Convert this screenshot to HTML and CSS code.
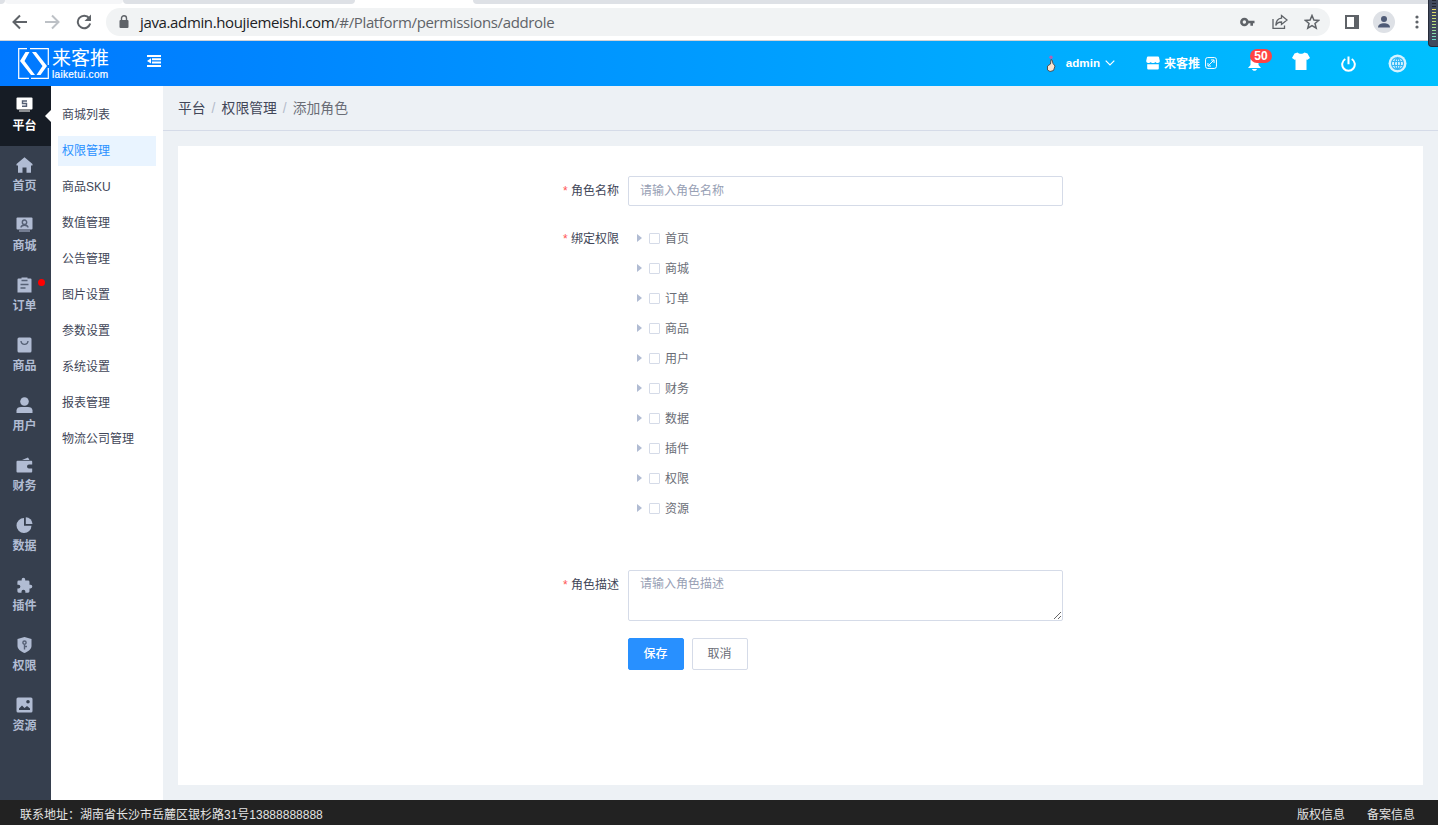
FILE: index.html
```html
<!DOCTYPE html>
<html lang="zh-CN">
<head>
  <meta charset="UTF-8">
  <title>添加角色</title>
  <link rel="stylesheet" href="styles.css">
</head>
<body>
  <div class="browser">
    <div class="tabs"><i class="t1"></i><i class="t2"></i><i class="t3"></i><i class="t4"></i></div>
    <div class="toolbar">
      <svg class="nav-icon" width="16" height="16" viewBox="0 0 16 16" fill="none" stroke="#5f6368" stroke-width="2"><path d="M15 8H2M8 1.5L1.5 8L8 14.5"/></svg>
      <svg class="nav-icon" width="16" height="16" viewBox="0 0 16 16" fill="none" stroke="#bdc1c6" stroke-width="2"><path d="M1 8H14M8 1.5L14.5 8L8 14.5"/></svg>
      <svg class="nav-icon" width="16" height="16" viewBox="0 0 16 16"><path d="M13.2 4.2A6.3 6.3 0 1 0 14.2 9.6" fill="none" stroke="#5f6368" stroke-width="2"/><path d="M15 0.5V7H8.5z" fill="#5f6368"/></svg>
      <div class="address">
        <svg width="10" height="14" viewBox="0 0 10 14"><rect x="0.5" y="5" width="9" height="8" rx="1" fill="#5f6368"/><path d="M2.5 5.5V3.3a2.5 2.5 0 0 1 5 0V5.5" fill="none" stroke="#5f6368" stroke-width="1.4"/></svg>
        <div class="url">java.admin.houjiemeishi.com<span>/#/Platform/permissions/addrole</span></div>
        <svg class="key" width="15" height="10" viewBox="0 0 15 10"><circle cx="4.4" cy="5" r="3" fill="none" stroke="#5f6368" stroke-width="2.6"/><path d="M7 3.7h7.5v2.6H13v2.4h-2.6V6.3H7z" fill="#5f6368"/></svg>
        <svg class="share" width="16" height="16" viewBox="0 0 16 16" fill="none" stroke="#5f6368" stroke-width="1.3"><path d="M1 5V14.3H12.5V11.5"/><path d="M9.5 1.5L15 6L9.500 10.500V8C6.500 8 4.800 9 3.800 11.500C4 7 6 4.500 9.500 4.200z"/></svg>
        <svg class="star" width="16" height="16" viewBox="0 0 16 16"><path d="M8 1.5L9.900 6L14.700 6.400L11 9.500L12.200 14.200L8 11.700L3.800 14.200L5 9.500L1.300 6.400L6.100 6z" fill="none" stroke="#5f6368" stroke-width="1.5"/></svg>
      </div>
      <svg class="panel" width="14" height="14" viewBox="0 0 14 14"><path d="M1 1H13V13H1z" fill="none" stroke="#5f6368" stroke-width="2"/><rect x="9" width="5" height="14" fill="#5f6368"/></svg>
      <svg class="profile" width="22" height="22" viewBox="0 0 22 22"><circle cx="11" cy="11" r="11" fill="#dee1e6"/><circle cx="11" cy="8" r="3" fill="#4f5b76"/><path d="M5 16.5c0-3 3-4.3 6-4.3s6 1.3 6 4.3z" fill="#4f5b76"/></svg>
      <svg class="more" width="4" height="14" viewBox="0 0 4 14" fill="#5f6368"><circle cx="2" cy="2" r="1.6"/><circle cx="2" cy="7" r="1.6"/><circle cx="2" cy="12" r="1.6"/></svg>
    </div>
    <div class="meter"><i></i></div>
  </div>

  <header class="header">
    <div class="logo">
      <svg width="31" height="31" viewBox="0 0 31 31" fill="none" stroke="#fff"><path d="M12 0.7H30.3V17M30.3 20V30.3H13M11 30.3H0.7V0.7H9" stroke-width="1.2"/><path d="M7.500 4H11.500L6.500 13L17 27H13L2 13z" fill="#fff" stroke="none"/><path d="M14 4H18L29 18L22.500 27H18.500L24.500 18z" fill="#fff" stroke="none"/></svg>
      <div class="logo-text">
        <b>来客推</b>
        <span>laiketui.com</span>
      </div>
    </div>
    <svg class="fold" width="14" height="12" viewBox="0 0 14 12" fill="#fff"><path d="M0 0h14v2H0zM5 3.2h9v2H5zM5 6.600h9v2H5zM0 10h14v2H0zM0 6L4 3.300V8.600z"/></svg>
    <div class="user">
      <svg class="avatar" width="10" height="17" viewBox="0 0 10 17"><path d="M5 4.5L4.500 9L1.500 11V15L4 16.500L7.500 15.500L9 11L7 8.500L6 5z" fill="#f7e5d2" stroke="#4a4648" stroke-width="0.9"/><circle cx="5" cy="2.2" r="1.7" fill="#b062b5"/></svg>
      <b>admin</b>
      <svg width="10" height="6" viewBox="0 0 10 6"><path d="M0.7 0.7L5 5L9.3 0.7" fill="none" stroke="#fff" stroke-width="1.2"/></svg>
    </div>
    <div class="shop">
      <svg width="14" height="14" viewBox="0 0 14 14" fill="#fff"><path d="M2 0.5h10a1 1 0 0 1 1 0.800L13.800 5c0 1.300-1 2-2 2S9.500 6.500 9.300 6C9 6.700 8 7 7 7S5 6.700 4.700 6C4.400 6.700 3.300 7 2.200 7S0.200 6.300 0.200 5L1 1.300a1 1 0 0 1 1-0.800zM1.200 8.200h11.600V12.500a1 1 0 0 1-1 1H2.200a1 1 0 0 1-1-1z"/></svg>
      <b>来客推</b>
      <svg width="12" height="12" viewBox="0 0 11 11" fill="none" stroke="#fff" stroke-width="0.9"><rect x="0.5" y="0.5" width="10" height="10" rx="2"/><path d="M3 8L8 3M5.500 2.700H8.300V5.500M2.700 5.500V8.300H5.500"/></svg>
    </div>
    <div class="bell">
      <svg width="13" height="15" viewBox="0 0 13 15" fill="#fff"><path d="M6.500 0.500C9 0.500 10.500 2.500 10.500 5V9L13 12H0L2.500 9V5C2.500 2.500 4 0.500 6.500 0.500zM4 13h5c-0.300 1-1.300 1.800-2.500 1.800S4.300 14 4 13z"/></svg>
      <em>50</em>
    </div>
    <svg class="shirt" width="18" height="18" viewBox="0 0 18 18" fill="#fff"><path d="M5.500 0.500C7 2.200 11 2.200 12.500 0.500L15.500 1.500L18 6L15 8L14.500 7.300V18H3.500V7.300L3 8L0 6L2.500 1.500z"/></svg>
    <svg class="power" width="15" height="16" viewBox="0 0 15 16" fill="none" stroke="#fff" stroke-width="2"><path d="M4.300 3A6.300 6.300 0 1 0 10.700 3M7.500 0.500V8.300"/></svg>
    <svg class="globe" width="19" height="19" viewBox="0 0 19 19"><circle cx="9.5" cy="9.5" r="9" fill="#d5f3ff"/><path d="M9.500 3.500a6 6 0 1 0 0 12a6 6 0 1 0 0-12zM9.500 3.500c-4 3-4 9 0 12c4-3 4-9 0-12zM9.500 3.500V15.500M4 7.500H15M4 11.500H15" fill="none" stroke="#31b7f6" stroke-width="1.1"/></svg>
  </header>

  <div class="main">
    <nav class="side">
      <a class="active"><svg viewBox="0 0 16 16"><rect y="0.5" width="16" height="12" rx="1"/><rect class="base" x="2.5" y="13" width="11" height="2"/><path class="cut" d="M10.500 4H6V6.500H10V9.300H5.500"/></svg>平台</a>
      <a><svg viewBox="0 0 16 16"><path d="M8 0.300L16 7V8.500H14.500V15.700H10V10.500H6V15.700H1.500V8.500H0V7z"/></svg>首页</a>
      <a><svg viewBox="0 0 16 16"><rect y="0.5" width="16" height="12" rx="1"/><rect class="base" x="2.5" y="13" width="11" height="2"/><path class="cut" d="M4.500 10.500C4.500 7.500 11.500 7.500 11.500 10.500M8 3A2.200 2.200 0 1 0 8 7.400A2.200 2.200 0 1 0 8 3"/></svg>商城</a>
      <a><svg viewBox="0 0 16 16"><path d="M2 1.500H5V0.500h6V1.500h3a1 1 0 0 1 1 1V15.500H1V2.500a1 1 0 0 1 1-1z"/><path class="cut" d="M5 3.500H11M4 7.500H12M4 11H9"/></svg>订单<i></i></a>
      <a><svg viewBox="0 0 16 16"><rect x="1" y="0.5" width="14" height="15" rx="1.5"/><path class="cut" d="M4.500 4C5 8.500 11 8.500 11.500 4"/></svg>商品</a>
      <a><svg viewBox="0 0 16 16"><circle cx="8" cy="4.5" r="4.3"/><path d="M0 16V13.500C0 11 2 10 4.500 10H11.500C14 10 16 11 16 13.500V16z"/></svg>用户</a>
      <a><svg viewBox="0 0 16 16"><path d="M5.500 3L11.500 0.500L13 3zM1 3.700H14.500a1 1 0 0 1 1.200 1V7.500H12.500a2 2 0 0 0 0 4H15.700V14.500a1 1 0 0 1-1.200 1H1a1 1 0 0 1-1-1V4.700a1 1 0 0 1 1-1z"/></svg>财务</a>
      <a><svg viewBox="0 0 16 16"><path d="M7.500 1V8.700H15A7.500 7.500 0 1 1 7.500 1z"/><path d="M9.300 0.200A7 7 0 0 1 16 6.900H9.300z"/></svg>数据</a>
      <a><svg viewBox="1 0 22 22.500"><path d="M20.500 11H19V7a2 2 0 0 0-2-2h-4V3.500a2.500 2.500 0 0 0-5 0V5H4a2 2 0 0 0-2 2v3.800h1.500a2.700 2.700 0 0 1 0 5.400H2V20a2 2 0 0 0 2 2h3.800v-1.500a2.700 2.700 0 0 1 5.400 0V22H17a2 2 0 0 0 2-2v-4h1.500a2.500 2.500 0 0 0 0-5z"/></svg>插件</a>
      <a><svg viewBox="0 0 16 16"><path d="M8 0L15 2V9C15 12.500 11.500 14.500 8 16C4.500 14.500 1 12.500 1 9V2z"/><path class="cut" d="M8 4A1.600 1.600 0 1 0 8 7.200A1.600 1.600 0 1 0 8 4M8 7.200V12.500M8 9.500H10.500"/></svg>权限</a>
      <a><svg viewBox="0 0 16 16"><rect y="0.5" width="16" height="15" rx="1.5"/><path class="hole" d="M2.500 13V11.500L5.500 8.500L8 11L10.500 9L13.500 11.500V13zM11.500 3A1.800 1.800 0 1 1 11.500 6.600A1.800 1.800 0 1 1 11.500 3z"/></svg>资源</a>
    </nav>

    <nav class="submenu">
      <a>商城列表</a>
      <a class="active">权限管理</a>
      <a>商品SKU</a>
      <a>数值管理</a>
      <a>公告管理</a>
      <a>图片设置</a>
      <a>参数设置</a>
      <a>系统设置</a>
      <a>报表管理</a>
      <a>物流公司管理</a>
    </nav>

    <div class="content">
      <div class="breadcrumb">平台<i>/</i>权限管理<i>/</i><span>添加角色</span></div>
      <form class="card">
        <div class="row">
          <label><i>*</i> 角色名称</label>
          <input type="text" placeholder="请输入角色名称">
        </div>
        <div class="row tree-row">
          <label><i>*</i> 绑定权限</label>
          <ul class="tree">
            <li><i></i><u></u>首页</li>
            <li><i></i><u></u>商城</li>
            <li><i></i><u></u>订单</li>
            <li><i></i><u></u>商品</li>
            <li><i></i><u></u>用户</li>
            <li><i></i><u></u>财务</li>
            <li><i></i><u></u>数据</li>
            <li><i></i><u></u>插件</li>
            <li><i></i><u></u>权限</li>
            <li><i></i><u></u>资源</li>
          </ul>
        </div>
        <div class="row">
          <label><i>*</i> 角色描述</label>
          <textarea placeholder="请输入角色描述"></textarea>
        </div>
        <div class="buttons">
          <button type="button" class="save">保存</button>
          <button type="button">取消</button>
        </div>
      </form>
    </div>
  </div>

  <footer class="footer">
    <div>联系地址：湖南省长沙市岳麓区银杉路31号13888888888</div>
    <div class="links"><a>版权信息</a><a>备案信息</a></div>
  </footer>
</body>
</html>
```
FILE: styles.css
```css
* {
  box-sizing: border-box;
}

body {
  margin: 0;
  height: 825px;
  overflow: hidden;
  display: flex;
  flex-direction: column;
  font-family: "Liberation Sans", "Noto Sans CJK SC", sans-serif;
  font-size: 12px;
  color: #414658;
}

svg {
  display: block;
  flex: none;
}

i, em {
  font-style: normal;
}

/* browser bar */
.browser {
  height: 41px;
  flex: none;
  background: #fff;
  border-bottom: 1px solid #d0d3d8;
  position: relative;
}

.tabs {
  height: 4px;
  display: flex;
}

.tabs i {
  background: #dee1e6;
  border-radius: 0 0 6px 6px;
}

.tabs .t1 {
  width: 5px;
  border-radius: 0 0 4px 0;
}

.tabs .t2 {
  width: 118px;
  background: #f5f6f8;
}

.tabs .t3 {
  width: 232px;
}

.tabs .t4 {
  margin-left: 118px;
  flex: 1;
  border-radius: 0 0 0 6px;
}

.toolbar {
  height: 36px;
  display: flex;
  align-items: center;
  padding-left: 12px;
}

.nav-icon {
  margin-right: 16px;
}

.address {
  width: 1224px;
  height: 28px;
  margin-left: -2px;
  border-radius: 14px;
  background: #f1f3f4;
  display: flex;
  align-items: center;
  padding: 0 10px 0 13px;
}

.url {
  flex: 1;
  margin-left: 11px;
  padding-bottom: 1px;
  font-family: "Open Sans", sans-serif;
  font-size: 15px;
  letter-spacing: -0.36px;
  color: #202124;
  white-space: nowrap;
}

.url span {
  color: #5f6368;
}

.key {
  margin-right: 17px;
}

.share {
  margin-right: 16px;
}

.panel {
  margin-left: 15px;
}

.profile {
  margin-left: 14px;
}

.more {
  margin-left: 20px;
}

.meter {
  position: absolute;
  z-index: 2;
  right: 0;
  top: 0;
  width: 10px;
  height: 47px;
  padding: 0 2px 0 3px;
  background: #414a5e;
  border: 1px solid #252a38;
  border-width: 0 0 1px 1px;
  border-radius: 0 0 0 4px;
}

.meter i {
  display: block;
  height: 40px;
  background: repeating-linear-gradient(transparent 0 1.5px, #414a5e 1.5px 3px), linear-gradient(#20242f 0 8px, #eedb65 9px, #b8df7d 24px, #69dccc);
}

/* header */
.header {
  height: 45px;
  flex: none;
  display: flex;
  align-items: center;
  padding: 0 31px 0 18px;
  background: linear-gradient(90deg, #0078ff, #00c0ff);
  color: #fff;
}

.logo {
  display: flex;
  width: 129px;
  padding-top: 1px;
}

.logo-text {
  margin-left: 3px;
}

.logo-text b,
.logo-text span {
  display: block;
  white-space: nowrap;
}

.logo-text b {
  font-size: 19px;
  line-height: 21px;
  font-weight: 400;
}

.logo-text span {
  font-size: 10px;
  line-height: 11px;
  letter-spacing: 0.3px;
  -webkit-text-stroke: 0.2px #fff;
}

.fold {
  margin: 0 auto 5px 0;
}

.user,
.shop {
  display: flex;
  align-items: center;
  padding-bottom: 1px;
}

.user b {
  margin: 0 5px 1px 10px;
  font-size: 11.6px;
}

.shop {
  margin-left: 31px;
}

.shop b {
  margin: 0 5px 1px 4px;
}

.bell {
  position: relative;
  margin-left: 31px;
}

.bell em {
  position: absolute;
  left: 2px;
  top: -7px;
  width: 22px;
  height: 14px;
  line-height: 14px;
  border-radius: 7px;
  background: #ff4343;
  font-weight: bold;
  text-align: center;
}

.shirt {
  margin: 0 31px 5px 31px;
}

.globe {
  margin-left: 32px;
}

/* page */
.main {
  flex: 1;
  display: flex;
  min-height: 0;
}

.side {
  width: 51px;
  background: #363f4e;
}

.side a {
  position: relative;
  height: 60px;
  padding: 11px 2px 0 0;
  display: flex;
  flex-direction: column;
  align-items: center;
  font-weight: bold;
  line-height: 18px;
  color: #b1bcd3;
}

.side svg {
  width: 17px;
  height: 16px;
  margin-bottom: 4px;
  fill: #b1bcd3;
}

.side .base {
  opacity: 0.5;
}

.side .cut {
  fill: none;
  stroke: #566176;
  stroke-width: 1.4;
}

.side .hole {
  fill: #363f4e;
}

.side .active {
  background: #161c25;
  color: #fff;
}

.side .active svg {
  fill: #fff;
}

.side .active::after {
  content: "";
  position: absolute;
  right: 0;
  top: 24px;
  border: 6px solid transparent;
  border-right-color: #fff;
  border-left: 0;
}

.side i {
  position: absolute;
  left: 38px;
  top: 13px;
  width: 7px;
  height: 7px;
  border-radius: 50%;
  background: #f00;
}

.submenu {
  width: 112px;
  padding: 14px 7px;
  background: #fff;
}

.submenu a {
  display: block;
  height: 30px;
  margin-bottom: 6px;
  padding-left: 4px;
  line-height: 31px;
}

.submenu .active {
  background: #e9f4ff;
  color: #2890ff;
}

.content {
  flex: 1;
  background: #edf1f5;
}

.breadcrumb {
  height: 45px;
  padding-left: 15px;
  line-height: 45px;
  font-size: 13.8px;
  border-bottom: 1px solid #d5dbe8;
}

.breadcrumb i {
  display: inline-block;
  width: 16px;
  padding-left: 6px;
  color: #b4bccb;
}

.breadcrumb span {
  color: #6a6d76;
}

.card {
  height: 639px;
  margin: 15px 15px 0;
  padding-top: 30px;
  background: #fff;
}

.row {
  display: flex;
  align-items: flex-start;
}

label {
  width: 441px;
  margin-right: 9px;
  text-align: right;
  line-height: 31px;
}

label i {
  color: #f55;
}

input,
textarea {
  display: block;
  width: 435px;
  margin: 0;
  border: 1px solid #d5dbe8;
  border-radius: 2px;
  font: inherit;
  padding: 0 11px;
}

input {
  height: 30px;
}

textarea {
  height: 51px;
  padding-top: 4px;
  line-height: 18px;
}

::placeholder {
  color: #97a0b4;
}

.tree-row {
  margin-top: 17px;
  height: 346px;
}

.tree {
  margin: 0;
  padding: 0 0 0 9px;
  list-style: none;
  color: #6a6d76;
}

.tree li {
  display: flex;
  align-items: center;
  height: 30px;
  line-height: 28px;
}

.tree i {
  margin-bottom: 2px;
  border: 4px solid transparent;
  border-left: 5px solid #b1bcd3;
  border-right: 0;
}

.tree u {
  width: 11px;
  height: 11px;
  margin: 0 5px 1px 7px;
  border: 1px solid #d5dbe8;
  border-radius: 1px;
}

.buttons {
  display: flex;
  gap: 8px;
  margin: 17px 0 0 450px;
}

button {
  width: 56px;
  height: 32px;
  padding: 0 1px 3px 0;
  border: 1px solid #d5dbe8;
  border-radius: 2px;
  background: #fff;
  font: inherit;
  color: #6a6d76;
}

.save {
  border-color: #2890ff;
  background: #2890ff;
  color: #fff;
  font-weight: 500;
}

.footer {
  height: 25px;
  flex: none;
  display: flex;
  justify-content: space-between;
  padding: 0 23px 0 20px;
  line-height: 30px;
  background: #222;
  color: #e4e4e4;
}

.links {
  display: flex;
  gap: 22px;
}
```
